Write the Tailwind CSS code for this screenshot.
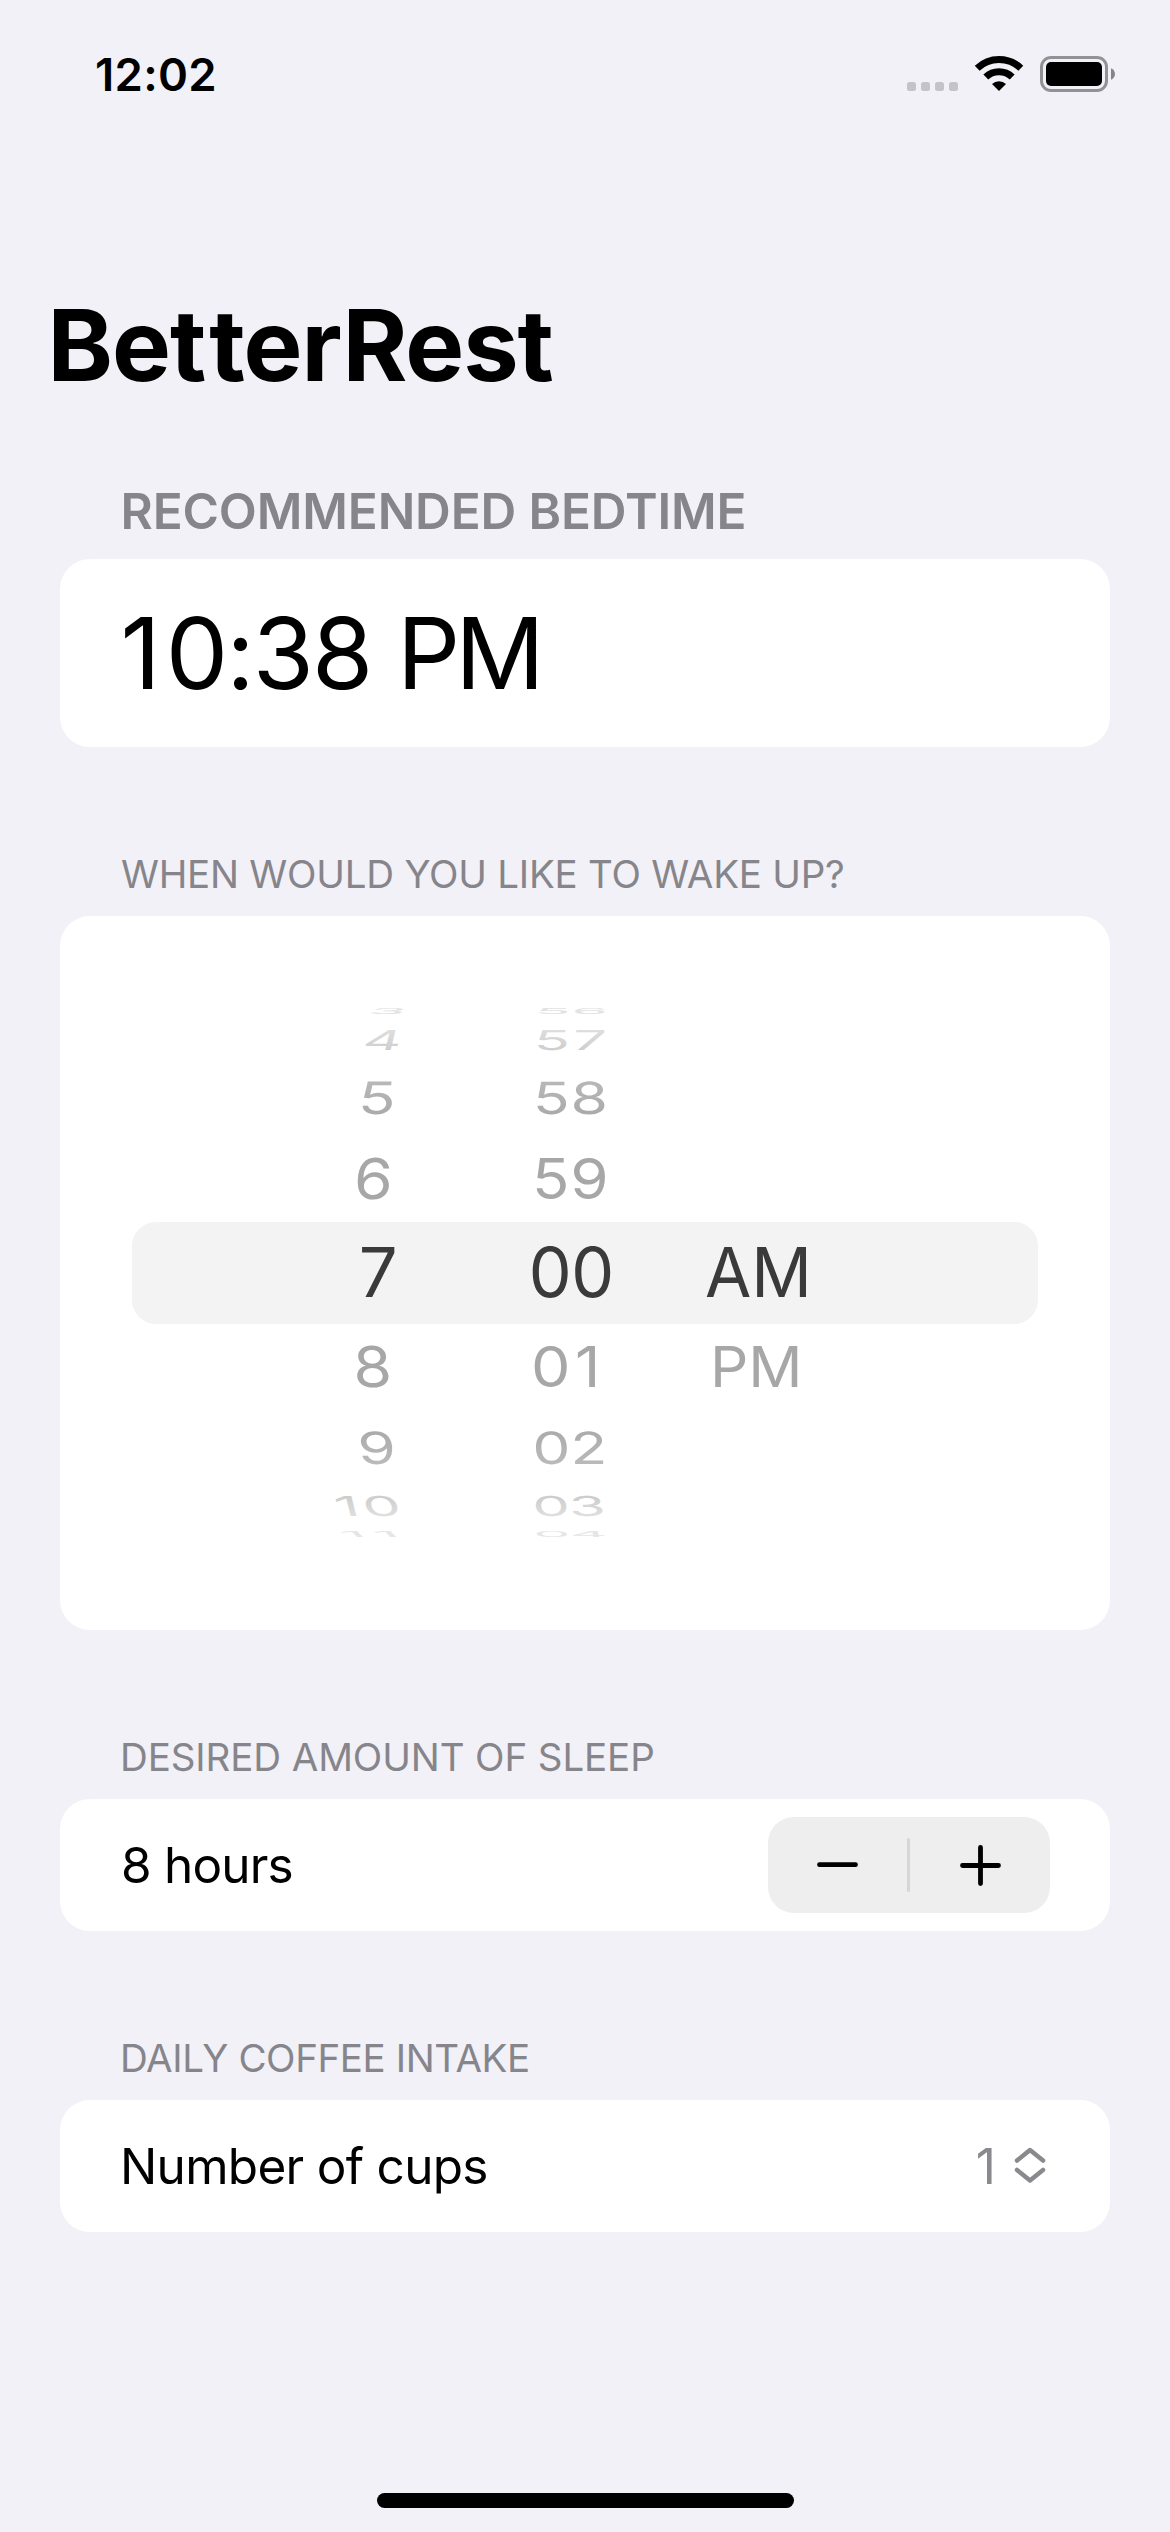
<!DOCTYPE html>
<html lang="en">
<head>
<meta charset="utf-8">
<title>BetterRest</title>
<script src="https://cdn.jsdelivr.net/npm/@tailwindcss/browser@4"></script>
</head>
<body class="bg-[#f2f1f7] font-['Inter',sans-serif] text-black">
<div class="flex h-[2532px] w-[1170px] flex-col overflow-hidden bg-[#f2f1f7]">

  <!-- Status bar -->
  <header class="flex h-[149px] shrink-0 items-center justify-between pl-[95px] pr-[55px]">
    <span class="text-[45.5px] font-semibold leading-none tracking-[0.3px]">12:02</span>
    <svg class="mt-[-3px] h-[40px] w-[210px]" viewBox="905 53 210 40">
      <g fill="#c4c3c9">
        <rect x="907" y="82" width="9" height="9" rx="2.5"/>
        <rect x="921" y="82" width="9" height="9" rx="2.5"/>
        <rect x="935" y="82" width="9" height="9" rx="2.5"/>
        <rect x="949" y="82" width="9" height="9" rx="2.5"/>
      </g>
      <g fill="none" stroke="#000" stroke-width="7">
        <path d="M977.2 68.2 A31.5 31.5 0 0 1 1020.8 68.2"/>
        <path d="M985.8 77 A19 19 0 0 1 1012.2 77"/>
      </g>
      <path d="M999 91 L992 84 A10 10 0 0 1 1006 84 Z"/>
      <rect x="1041.5" y="57.5" width="65" height="33" rx="9.5" fill="none" stroke="#929196" stroke-width="3"/>
      <rect x="1046" y="62" width="56" height="24" rx="5"/>
      <path d="M1111 68.3 C1116.3 70.5 1116.3 77.5 1111 79.7 Z" fill="#85848a"/>
    </svg>
  </header>

  <h1 class="mt-[136px] h-[120px] shrink-0 pl-[47.5px] text-[99px] font-bold leading-[120px] tracking-[-1px]">Be<span class="tracking-[3px]">t</span>terRest</h1>

  <main class="flex flex-col px-[60px] pt-[58px]">
    <section>
      <h2 class="h-[96px] pl-[60.5px] text-[49.5px] font-semibold leading-[96px] tracking-[-0.13px] text-[#86858b]">RECOMMENDED BEDTIME</h2>
      <div class="flex h-[188px] items-center rounded-[30px] bg-white pl-[60.5px]">
        <p class="text-[99px] leading-none tracking-[-2px]"><span class="tracking-[5px]">1</span>0:38 <span class="tracking-[-5px]">P</span>M</p>
      </div>
    </section>

    <section class="mt-[85px]">
      <h2 class="h-[84px] pl-[61px] text-[38.5px] leading-[84px] tracking-[-0.23px] text-[#86858b]">WHEN WOULD YOU LIKE TO WAKE UP?</h2>
      <div class="h-[714px] rounded-[30px] bg-white">
        <svg class="h-[714px] w-[1050px] font-['Inter',sans-serif] text-[68.5px]" viewBox="60 916 1050 714">
          <defs>
            <linearGradient id="up" x1="0" y1="0" x2="0" y2="1"><stop offset=".2" stop-color="#dedede"/><stop offset=".8" stop-color="#cecece"/></linearGradient>
            <linearGradient id="down" x1="0" y1="0" x2="0" y2="1"><stop offset=".2" stop-color="#cccccc"/><stop offset=".8" stop-color="#dedede"/></linearGradient>
            <linearGradient id="up2" x1="0" y1="0" x2="0" y2="1"><stop offset=".2" stop-color="#b8b8b8"/><stop offset=".8" stop-color="#ababab"/></linearGradient>
            <linearGradient id="down2" x1="0" y1="0" x2="0" y2="1"><stop offset=".2" stop-color="#ababab"/><stop offset=".8" stop-color="#bababa"/></linearGradient>
          </defs>
          <rect x="132" y="1222" width="906" height="102" rx="24" fill="#f3f3f3"/>
          <!-- Hours wheel -->
          <g text-anchor="end" class="tabular-nums">
            <text fill="#e2e2e2" transform="matrix(.88 0 -.12 .12 405 1014)">3</text>
            <text fill="url(#up)" transform="matrix(.88 0 -.1 .4 400 1050)">4</text>
            <text fill="url(#up2)" transform="matrix(.9 0 -.05 .65 396.5 1113.7)">5</text>
            <text fill="#a7a7a7" transform="matrix(.913 0 -.03 .82 393 1199.3)">6</text>
            <text fill="#3a3a3a" transform="matrix(1 0 0 1 400.5 1297)">7</text>
            <text fill="#a7a7a7" transform="matrix(.913 0 .03 .82 393.5 1387.3)">8</text>
            <text fill="url(#down2)" transform="matrix(.9 0 .05 .65 398 1463.7)">9</text>
          </g>
          <text class="tracking-[4px]" fill="url(#down)" transform="matrix(.88 0 .1 .4 337 1515.5)">10</text>
          <text class="tracking-[9.8px]" fill="#e6e6e6" transform="matrix(.88 0 .12 .12 343.5 1537)">11</text>
          <!-- Minutes wheel -->
          <g text-anchor="middle" class="tabular-nums tracking-[-2px]">
            <text fill="#e2e2e2" transform="matrix(.86 0 -.03 .12 570 1014)">56</text>
            <text fill="url(#up)" transform="matrix(.87 0 -.03 .4 569.5 1050)">57</text>
            <text fill="url(#up2)" transform="matrix(.885 0 -.01 .65 569.5 1113.7)">58</text>
            <text fill="#a7a7a7" transform="matrix(.9 0 0 .82 569.5 1199.3)">59</text>
            <text fill="#3a3a3a" transform="matrix(1 0 0 1 570.5 1297)">00</text>
            <text fill="url(#down2)" transform="matrix(.885 0 .01 .65 569.5 1463.7)">02</text>
            <text fill="url(#down)" transform="matrix(.87 0 .03 .4 569.5 1515.5)">03</text>
            <text fill="#e6e6e6" transform="matrix(.86 0 .03 .12 570 1537)">04</text>
          </g>
          <text class="tracking-[5px]" fill="#a7a7a7" transform="matrix(.913 0 0 .82 531 1387.3)">01</text>
          <!-- Day period wheel -->
          <text fill="#3a3a3a" transform="matrix(.98 0 0 1 705 1297)">AM</text>
          <text fill="#a7a7a7" transform="matrix(.877 0 0 .82 710 1387.3)">PM</text>
        </svg>
      </div>
    </section>

    <section class="mt-[85px]">
      <h2 class="h-[84px] pl-[60px] text-[38.5px] leading-[84px] tracking-[-0.1px] text-[#86858b]">DESIRED AMOUNT OF SLEEP</h2>
      <div class="flex h-[132px] items-center justify-between rounded-[30px] bg-white px-[60px]">
        <p class="pl-[1px] pt-[2px] text-[49.5px] leading-none tracking-[-0.8px]">8 hours</p>
        <svg class="h-[96px] w-[282px]" viewBox="768 1817 282 96">
          <rect x="768" y="1817" width="282" height="96" rx="26" fill="#eeeeee"/>
          <rect x="907" y="1838" width="3" height="54" rx="1.5" fill="#d6d6d6"/>
          <path d="M819.5 1864.7H855.5M962.5 1865.5H998.5M980.5 1847.5V1883.5" stroke="#000" stroke-width="4.8" stroke-linecap="round"/>
        </svg>
      </div>
    </section>

    <section class="mt-[85px]">
      <h2 class="h-[84px] pl-[60px] text-[38.5px] leading-[84px] tracking-[-0.4px] text-[#86858b]">DAILY COFFEE INTAKE</h2>
      <div class="flex h-[132px] items-center rounded-[30px] bg-white pl-[60px] pr-[64px]">
        <p class="grow pt-[2px] text-[49.5px] leading-none tracking-[-0.7px]">Number of cups</p>
        <span class="pr-[18px] pt-[1px] text-[49.5px] leading-none text-[#8a8a8e]">1</span>
        <svg class="h-[40px] w-[32px]" viewBox="1013 2146 32 40" fill="none" stroke="#8a8a8e" stroke-width="4.5" stroke-linecap="round" stroke-linejoin="round">
          <path d="M1016 2160.5 L1029 2150 L1042 2160.5M1016 2170 L1029 2180.5 L1042 2170"/>
        </svg>
      </div>
    </section>
  </main>

  <!-- Home indicator -->
  <div class="mx-auto mb-[24px] mt-auto h-[15px] w-[417px] shrink-0 rounded-full bg-black"></div>
</div>
</body>
</html>
